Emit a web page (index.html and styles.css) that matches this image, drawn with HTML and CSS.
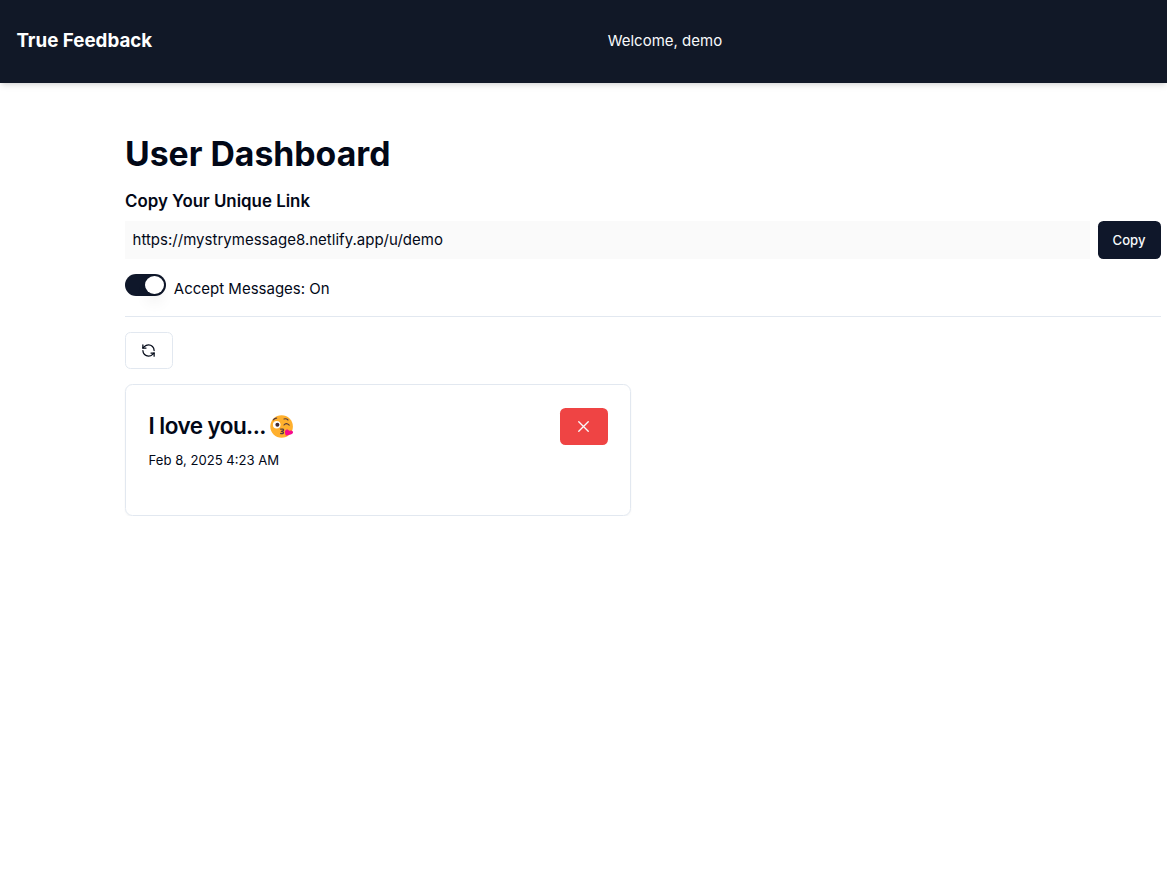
FILE: index.html
```html
<!DOCTYPE html>
<html lang="en">
<head>
<meta charset="utf-8">
<title>True Feedback</title>
<link rel="stylesheet" href="styles.css">
</head>
<body>
<nav class="navbar">
  <a class="brand">True Feedback</a>
  <span class="welcome">Welcome, demo</span>
</nav>
<main class="dashboard">
  <h1 class="title">User Dashboard</h1>
  <h2 class="subtitle">Copy Your Unique Link</h2>
  <div class="link-row">
    <div class="link-field">https://mystrymessage8.netlify.app/u/demo</div>
    <button class="copy">Copy</button>
  </div>
  <div class="accept">
    <div class="switch"><div class="thumb"></div></div>
    <span class="accept-label">Accept Messages: On</span>
  </div>
  <div class="separator"></div>
  <button class="refresh" aria-label="Refresh">
    <svg class="icon" viewBox="0 0 24 24" fill="none" stroke="currentColor" stroke-width="2" stroke-linecap="round" stroke-linejoin="round"><path d="M21 12a9 9 0 0 0-9-9 9.75 9.75 0 0 0-6.74 2.74L3 8"/><path d="M3 3v5h5"/><path d="M3 12a9 9 0 0 0 9 9 9.75 9.75 0 0 0 6.74-2.74L21 16"/><path d="M16 16h5v5"/></svg>
  </button>
  <article class="card">
    <div class="card-head">
      <h3 class="message"><span>I love you...</span><svg class="emoji" viewBox="0 0 24 24" role="img" aria-label="Face blowing a kiss"><circle cx="11.6" cy="11.5" r="11.3" fill="#ffb02e"/><circle cx="6.7" cy="9.7" r="3.8" fill="#fff"/><circle cx="7.4" cy="9.8" r="2" fill="#402a32"/><path d="M3.3 4.9Q4.5 3.2 6.7 3.1M14 4q2.3-.7 4 1M14 10q2.2-2.8 5.2.2" fill="none" stroke="#553b3e" stroke-width="1.1" stroke-linecap="round"/><path d="M10.7 14.2c4-.8 3.5 2 .7 2.1 3.1.3 2.6 3.1-.7 2.2" fill="none" stroke="#553b3e" stroke-width="1.3" stroke-linecap="round" stroke-linejoin="round"/><path d="M16 20.8c-1-2.4-1.7-5.1.2-6.1 1.2-.6 2.5 0 2.9 1.2 1.2-.7 3-.6 3.7.7 1.1 2-1.4 3.1-6.8 4.2z" fill="#f70a8d"/></svg></h3>
      <button class="delete" aria-label="Delete"><svg class="x-icon" viewBox="0 0 24 24" fill="none" stroke="currentColor" stroke-width="2" stroke-linecap="round"><path d="M18 6 6 18M6 6l12 12"/></svg></button>
    </div>
    <time class="date">Feb 8, 2025 4:23 AM</time>
  </article>
</main>
</body>
</html>
```
FILE: styles.css
```css
* { box-sizing: border-box; }
body {
  margin: 0;
  background: #fff;
  color: #020817;
  font: 15px/22px Inter, "Liberation Sans", sans-serif;
}
h1, h2, h3 { margin: 0; }
button { font: inherit; padding: 0; border: 0; border-radius: 5.5px; }
svg { display: block; }
.navbar {
  height: 83px;
  padding: 0 16.4px 2px;
  display: flex;
  align-items: center;
  background: #111827;
  color: #fff;
  box-shadow: 0 4px 6px -1px rgb(0 0 0 / 10%), 0 2px 4px -2px rgb(0 0 0 / 10%);
}
.brand { width: 591.3px; font-size: 18.75px; font-weight: 700; line-height: 26px; }
.welcome { color: #f8fafc; }
.dashboard { margin: 52px 6.5px 0 125px; }
.title { font-size: 33.75px; line-height: 38px; font-weight: 700; }
.subtitle { margin-top: 15px; font-size: 16.87px; line-height: 26px; font-weight: 600; }
.link-row { margin-top: 7px; display: flex; gap: 7.5px; }
.link-field { flex: 1; height: 38px; padding: 0 7.5px; line-height: 38px; letter-spacing: 0.015px; background: #fafafa; }
.copy {
  width: 63px;
  height: 38px;
  background: #0f172a;
  color: #f8fafc;
  font-size: 13.1px;
  font-weight: 500;
}
.accept { margin-top: 15px; height: 27px; display: flex; align-items: flex-start; gap: 7.5px; }
.switch {
  width: 41.3px;
  height: 22px;
  padding: 2px;
  border-radius: 11px;
  display: flex;
  justify-content: flex-end;
  background: #0f172a;
}
.thumb {
  width: 18.7px;
  height: 18px;
  margin-right: 0.4px;
  border-radius: 50%;
  background: #fff;
  box-shadow: 0 10px 15px -3px rgb(0 0 0 / 10%), 0 4px 6px -4px rgb(0 0 0 / 10%);
}
.accept-label { padding-top: 4px; }
.separator { margin-top: 15px; height: 1px; background: #e2e8f0; }
.refresh {
  margin-top: 15px;
  width: 47.5px;
  height: 37px;
  display: grid;
  place-items: center;
  background: #fff;
  border: 1px solid #e2e8f0;
  color: #020817;
}
.icon { width: 15px; height: 15px; }
.card {
  margin-top: 15px;
  width: 506.4px;
  height: 132px;
  padding: 23px 22.6px;
  border: 1px solid #e2e8f0;
  border-radius: 7.5px;
  box-shadow: 0 1px 2px rgb(0 0 0 / 5%);
}
.card-head { display: flex; justify-content: space-between; }
.message {
  height: 37px;
  display: flex;
  align-items: center;
  gap: 4px;
  font-size: 22.5px;
  line-height: 35px;
  font-weight: 600;
  letter-spacing: -0.56px;
}
.message span { padding-bottom: 2px; }
.emoji { width: 24px; height: 24px; }
.delete {
  width: 48px;
  height: 37px;
  display: grid;
  place-items: center;
  background: #ef4444;
  color: #f8fafc;
}
.x-icon { width: 19px; height: 19px; stroke-width: 1.7; }
.date { display: block; margin-top: 6px; font-size: 13.1px; line-height: 19px; }
```
